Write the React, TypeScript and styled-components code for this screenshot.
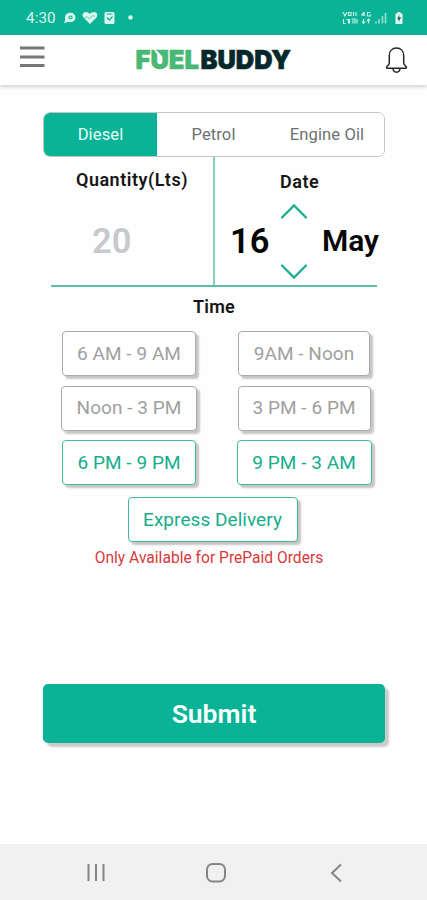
import React from "react";
import styled, { createGlobalStyle } from "styled-components";

const GREEN = "#0ab296";

const GlobalStyle = createGlobalStyle`
  *, *::before, *::after { box-sizing: border-box; }
  html, body { margin: 0; padding: 0; background: #fff; }
  body { font-family: Roboto, "Liberation Sans", sans-serif; overflow: hidden; }
  button { font-family: inherit; margin: 0; padding: 0; cursor: pointer; }
`;

const Screen = styled.div`
  width: 427px;
  height: 900px;
  display: flex;
  flex-direction: column;
  background: #fefefe;
`;

const StatusBar = styled.div`
  height: 35px;
  flex: none;
  display: flex;
  align-items: center;
  padding: 1px 23px 0 26px;
  background: ${GREEN};
  color: #d9f6ef;
`;

const Clock = styled.span`
  width: 37px;
  font-size: 15.2px;
  line-height: 18px;
  letter-spacing: 0.1px;
`;

const StatusIcons = styled.div<{ $end?: boolean }>`
  display: flex;
  margin-left: ${(p) => (p.$end ? "auto" : "0")};
  svg { display: block; }
`;

const Header = styled.header`
  height: 50px;
  flex: none;
  display: grid;
  grid-template-columns: 132px 162px 1fr;
  align-items: center;
  padding: 0 19px 0 0;
  background: #fff;
  box-shadow: 0 2px 4px rgba(0, 0, 0, 0.18);
`;

const IconButton = styled.button<{ $right?: boolean }>`
  border: 0;
  background: none;
  display: flex;
  justify-self: ${(p) => (p.$right ? "end" : "start")};
  padding: ${(p) => (p.$right ? "0" : "0 0 6px 20px")};
`;

const Logo = styled.svg`
  display: block;
  width: 162px;
  height: 40px;
  font-family: Inter, sans-serif;
  font-weight: 900;
  font-size: 26px;
  stroke-width: 0.6;
`;

const Main = styled.main`
  flex: 1;
  display: flex;
  flex-direction: column;
  align-items: center;
  padding: 27px 0 0 1px;
`;

const Tabs = styled.div`
  width: 342px;
  height: 45px;
  flex: none;
  display: grid;
  grid-template-columns: 113px 113px 1fr;
  border: 1.5px solid #bfc8c6;
  border-radius: 7px;
  overflow: hidden;
`;

const Tab = styled.button<{ $active?: boolean }>`
  border: 0;
  font-size: 16.6px;
  line-height: 20px;
  letter-spacing: 0.1px;
  color: ${(p) => (p.$active ? "#e4fff8" : "#6c7271")};
  background: ${(p) => (p.$active ? GREEN : "#fff")};
`;

const Order = styled.section`
  width: 326px;
  height: 130px;
  flex: none;
  display: grid;
  grid-template-columns: 164px 162px;
  border-bottom: 2px solid #5abfa6;
`;

const Quantity = styled.div`
  display: flex;
  flex-direction: column;
  border-right: 2px solid #82d2bd;
  padding: 11px 0 0 25px;
`;

const FieldTitle = styled.h2<{ $spacing?: number }>`
  margin: 0;
  font-size: 18px;
  line-height: 24px;
  font-weight: 600;
  letter-spacing: ${(p) => p.$spacing ?? 0.2}px;
  color: #161616;
  white-space: nowrap;
`;

const Amount = styled.span`
  margin: 29px 0 0 16px;
  font-size: 34.5px;
  line-height: 40px;
  font-weight: 600;
  color: #c7c9cc;
`;

const DateField = styled.div`
  display: flex;
  flex-direction: column;
  padding-top: 13px;
  ${FieldTitle} { padding-left: 65px; }
`;

const DatePicker = styled.div`
  display: grid;
  grid-template-columns: 50px 32px 1fr;
  align-items: center;
  margin: 8px -2px 0 15px;
  height: 78px;
  color: #060606;
`;

const Day = styled.span`
  font-size: 34.5px;
  line-height: 40px;
  font-weight: 600;
`;

const Month = styled.span`
  font-size: 30px;
  line-height: 40px;
  font-weight: 600;
  padding-bottom: 1px;
  text-align: right;
`;

const Steppers = styled.div`
  height: 78px;
  display: flex;
  flex-direction: column;
  justify-content: space-between;
`;

const Stepper = styled.button`
  border: 0;
  background: none;
  display: flex;
  height: 18px;
`;

const TimeTitle = styled(FieldTitle)`
  margin-top: 8px;
`;

const Slots = styled.div`
  display: grid;
  grid-template-columns: 175px 175px;
  grid-auto-rows: 45px;
  row-gap: 9.5px;
  justify-items: center;
  margin: 12px 0 0 5px;
`;

const Slot = styled.button<{ $w: number; $open?: boolean }>`
  width: ${(p) => p.$w}px;
  height: 45px;
  flex: none;
  border: 1.5px solid ${(p) => (p.$open ? "#3fba9d" : "#ababab")};
  border-radius: 4px;
  background: #fff;
  color: ${(p) => (p.$open ? "#17ad8b" : "#a0a0a0")};
  font-size: 19px;
  line-height: 24px;
  letter-spacing: 0.05px;
  box-shadow: 3px 3px 2px rgba(0, 0, 0, 0.22);
  white-space: nowrap;
`;

const Express = styled(Slot)`
  margin: 12px 3px 0 0;
`;

const Note = styled.p`
  margin: 6px 10px 0 0;
  font-size: 15.6px;
  line-height: 20px;
  color: #d83a3a;
`;

const Submit = styled.button`
  width: 342px;
  height: 59px;
  flex: none;
  margin-top: 116px;
  border: 0;
  border-radius: 5px;
  background: ${GREEN};
  color: #f4fffc;
  font-size: 26.5px;
  font-weight: 600;
  box-shadow: 4px 4px 2px rgba(0, 0, 0, 0.2);
`;

const NavBar = styled.nav`
  height: 56px;
  flex: none;
  display: grid;
  grid-template-columns: 31px 31px 31px;
  justify-content: center;
  column-gap: 89px;
  align-items: center;
  padding: 1px 0 0 4px;
  background: #f1f1f1;
  svg { display: block; }
`;

const NavButton = styled.button`
  border: 0;
  background: none;
  display: flex;
  justify-content: center;
`;

const NotificationIcons = () => (
  <svg width="76" height="18" viewBox="0 0 76 18" fill="#d9f6ef">
    <path d="M7.3 3.8c2.9 0 5.2 2 5.2 4.7s-2.3 4.7-5.2 4.7c-.8 0-1.5-.1-2.2-.4L.8 14.3l1.6-3.3a4.5 4.5 0 0 1-.4-2.5c0-2.700 2.400-4.700 5.300-4.700z" />
    <circle cx="7.5" cy="8.5" r="2.1" fill={GREEN} />
    <circle cx="7.5" cy="8.5" r="1" />
    <path d="M27 15l-6.500-6.500C18.500 6 20 3 23 3c2 0 3.200 1 4 2 .8-1 2-2 4-2 3 0 4.300 3 2.500 5.500z" />
    <path d="M21.500 9.500l2.500-2 2.500 2.500 3-3.500 2.500 1" fill="none" stroke={GREEN} strokeWidth=".9" opacity=".7" />
    <rect x="41.5" y="3" width="10" height="12" rx="1.5" />
    <path d="M43.500 5h6M44 8.500l2.500 2.500 3-3.500" fill="none" stroke={GREEN} strokeWidth="1.2" />
    <circle cx="67.5" cy="8.5" r="2.3" />
  </svg>
);

const SignalIcons = () => (
  <svg width="62" height="16" viewBox="0 0 62 16" fill="none" stroke="#c4f0e5" strokeWidth="1.2">
    <path d="M1 2l2 4 2-4M6.500 2.500h2.500v3h-2.500zM11.500 2v4M14 2v4M1.500 9v4.500h2M4.500 9.500h3v4M6.500 9.500v4M9.500 9h3.500v4.500M11 10v3.500M15 9v4.500" />
    <path d="M22 2l-2 3h3M22 2v4M28.500 2.500H25.500V6h3V4.500M21.500 9v4M20 11.500l1.500 2 1.500-2M26.500 13.500V9.500M25 11l1.500-2 1.500 2" />
    <path d="M34 11.500v2M37 9v4.500M40.500 6v7.500M43.500 3v10.500" strokeWidth="1.6" opacity=".75" />
    <path d="M53.500 3.500h2V2h3v1.500h2V14h-7z" fill="#e6faf5" stroke="none" />
    <path d="M57.300 4.500l-2.200 4.800h1.600v3l2.400-5h-1.800z" fill="#176a5c" stroke="none" />
  </svg>
);

const LogoMark = () => (
  <Logo viewBox="0 0 162 40">
    <text x="3.5" y="28.8" textLength="63.5" lengthAdjust="spacingAndGlyphs" fill="#49b875" stroke="#49b875">FUEL</text>
    <text x="68.5" y="28.8" textLength="90.5" lengthAdjust="spacingAndGlyphs" fill="#07282b" stroke="#07282b">BUDDY</text>
    {/* pump nozzle cut into the U */}
    <path d="M24.500 9.800h7V18l-3-3.500z" fill="#49b875" />
    <path d="M22.800 9.500l4.700 7v5" fill="none" stroke="#fff" strokeWidth="1.5" />
  </Logo>
);

const BellIcon = () => (
  <svg width="23" height="28" viewBox="0 0 23 28" fill="none" stroke="#252525" strokeWidth="1.5">
    <path d="M11.500 2C7 2 4.300 5.200 4.300 9.500V17c0 2-2.800 3.200-2.800 4.500 0 .6.300.8 1 .8h18c.7 0 1-.2 1-.8 0-1.300-2.800-2.500-2.800-4.500V9.500C18.700 5.200 16 2 11.500 2z" />
    <path d="M8 22.500c.2 2.300 1.500 3.700 3.500 3.700s3.300-1.400 3.500-3.700" />
  </svg>
);

const Chevron = ({ down }: { down?: boolean }) => (
  <svg width="28" height="18" viewBox="0 0 28 18" fill="none" stroke="#1bae93" strokeWidth="2.3" strokeLinecap="round">
    <path d={down ? "M2 3.500l12 12 12-12" : "M2 15.500l12-12 12 12"} />
  </svg>
);

const slots = [
  { label: "6 AM - 9 AM", w: 134, open: false },
  { label: "9AM - Noon", w: 132, open: false },
  { label: "Noon - 3 PM", w: 136, open: false },
  { label: "3 PM - 6 PM", w: 133, open: false },
  { label: "6 PM - 9 PM", w: 134, open: true },
  { label: "9 PM - 3 AM", w: 135, open: true },
];

export default function App() {
  return (
    <>
      <GlobalStyle />
      <Screen>
        <StatusBar>
          <Clock>4:30</Clock>
          <StatusIcons><NotificationIcons /></StatusIcons>
          <StatusIcons $end><SignalIcons /></StatusIcons>
        </StatusBar>
        <Header>
          <IconButton aria-label="Menu">
            <svg width="25" height="22" viewBox="0 0 25 22" stroke="#777" strokeWidth="3">
              <path d="M0 2h24.500M0 11h24.500M0 19.500h24.500" />
            </svg>
          </IconButton>
          <LogoMark />
          <IconButton $right aria-label="Notifications"><BellIcon /></IconButton>
        </Header>
        <Main>
          <Tabs>
            <Tab $active>Diesel</Tab>
            <Tab>Petrol</Tab>
            <Tab>Engine Oil</Tab>
          </Tabs>
          <Order>
            <Quantity>
              <FieldTitle $spacing={0.5}>Quantity(Lts)</FieldTitle>
              <Amount>20</Amount>
            </Quantity>
            <DateField>
              <FieldTitle $spacing={0.5}>Date</FieldTitle>
              <DatePicker>
                <Day>16</Day>
                <Steppers>
                  <Stepper aria-label="Next day"><Chevron /></Stepper>
                  <Stepper aria-label="Previous day"><Chevron down /></Stepper>
                </Steppers>
                <Month>May</Month>
              </DatePicker>
            </DateField>
          </Order>
          <TimeTitle>Time</TimeTitle>
          <Slots>
            {slots.map((s) => (
              <Slot key={s.label} $w={s.w} $open={s.open}>{s.label}</Slot>
            ))}
          </Slots>
          <Express $w={170} $open>Express Delivery</Express>
          <Note>Only Available for PrePaid Orders</Note>
          <Submit>Submit</Submit>
        </Main>
        <NavBar>
          <NavButton aria-label="Recents">
            <svg width="18" height="20" viewBox="0 0 18 20" stroke="#858585" strokeWidth="2">
              <path d="M1.500 1v17M9 1v17M16.500 1v17" />
            </svg>
          </NavButton>
          <NavButton aria-label="Home">
            <svg width="20" height="20" viewBox="0 0 20 20" fill="none" stroke="#858585" strokeWidth="2">
              <rect x="1" y="1" width="18" height="17.5" rx="5.5" />
            </svg>
          </NavButton>
          <NavButton aria-label="Back">
            <svg width="12" height="20" viewBox="0 0 12 20" fill="none" stroke="#858585" strokeWidth="2">
              <path d="M11 1.500L2 10l9 8.500" />
            </svg>
          </NavButton>
        </NavBar>
      </Screen>
    </>
  );
}
